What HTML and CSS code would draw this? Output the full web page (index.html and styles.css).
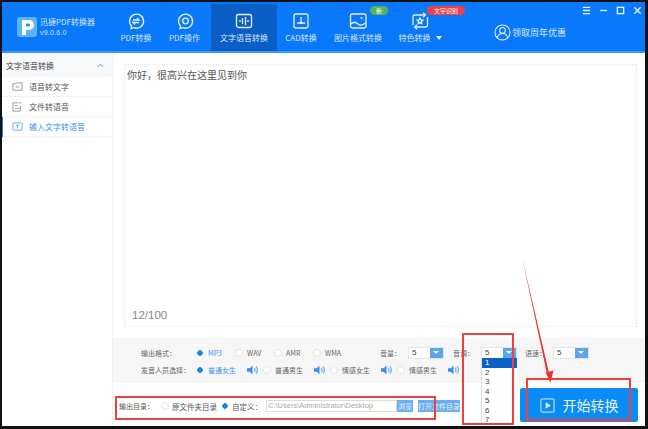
FILE: index.html
```html
<!DOCTYPE html>
<html lang="zh-CN">
<head>
    <meta charset="UTF-8">
    <meta name="viewport" content="width=device-width, initial-scale=1.0">
    <title>迅捷PDF转换器</title>
    <link rel="stylesheet" href="styles.css">
</head>
<body>
<div class="app">
    <header class="topbar">
        <div class="brand">
            <svg class="logo" viewBox="0 0 20 20" width="20" height="20">
                <rect x="0" y="0" width="20" height="20" rx="3" fill="#5db4f5"/>
                <path d="M5 18V3h7a5 5 0 0 1 0 10H9v5z" fill="#fff"/>
                <path d="M9 6.500v3h2.500a1.500 1.500 0 0 0 0-3z" fill="#2a8ef0"/>
            </svg>
            <div class="brand-text">
                <div class="brand-name">迅捷PDF转换器</div>
                <div class="brand-ver">v9.0.6.0</div>
            </div>
        </div>
        <nav class="tabs">
            <div class="tab tab-a">
                <svg viewBox="0 0 20 20" width="20" height="20" class="ico"><path d="M5.500 15A7 7 0 1 1 8 16.700L5 17.500z"/><path d="M7 9h6l-2-2M13 11.500H7l2 2"/></svg>
                <span>PDF转换</span>
            </div>
            <div class="tab tab-b">
                <svg viewBox="0 0 20 20" width="20" height="20" class="ico"><path d="M5.500 15A7 7 0 1 1 8 16.700L5 17.500z"/><circle cx="10.500" cy="10" r="2.800"/></svg>
                <span>PDF操作</span>
            </div>
            <div class="tab tab-c active">
                <svg viewBox="0 0 20 20" width="20" height="20" class="ico"><rect x="2.500" y="3.500" width="15" height="13" rx="2"/><path d="M6 9v2M8.500 7v6M11.500 6v8M14 9v2"/></svg>
                <span>文字语音转换</span>
            </div>
            <div class="tab tab-d">
                <svg viewBox="0 0 20 20" width="20" height="20" class="ico"><rect x="3" y="3" width="14" height="14" rx="2"/><path d="M10 6v6M6 12h8"/><circle class="dot" cx="10" cy="12" r="1.200"/></svg>
                <span>CAD转换</span>
            </div>
            <div class="tab tab-e">
                <svg viewBox="0 0 20 20" width="20" height="20" class="ico"><rect x="2.500" y="3" width="15.500" height="14" rx="2"/><path d="M3 13c3-3 5-2 7 0s4 1 8-1"/><circle class="dot" cx="13.500" cy="7" r="1"/></svg>
                <span>图片格式转换</span>
                <em class="badge badge-new">新</em>
            </div>
            <div class="tab tab-f">
                <svg viewBox="0 0 20 20" width="20" height="20" class="ico"><path d="M3 14V6a2 2 0 0 1 2-2h10M17.500 6v8a2 2 0 0 1-2 2H5M13 1.800l2.500 2.200L13 6.200M7 13.800L4.500 16 7 18.200"/><path d="M10 7l.9 1.900 2 .3-1.500 1.400.4 2-1.800-1-1.800 1 .4-2-1.500-1.400 2-.3z"/></svg>
                <span>特色转换<i class="caret"></i></span>
                <em class="badge badge-ocr">文字识别</em>
            </div>
        </nav>
        <div class="promo">
            <svg viewBox="0 0 18 18" width="17" height="17" class="ico"><circle cx="9" cy="9" r="8"/><circle cx="9" cy="6.800" r="3"/><path d="M3.500 15c.5-3.500 2.500-5 5.500-5s5 1.500 5.500 5"/></svg>
            <span>领取周年优惠</span>
        </div>
        <div class="winbtns">
            <svg viewBox="0 0 10 10" width="9" height="9"><path d="M1 1.500h8M1 5h8M1 8.500h8"/></svg>
            <svg viewBox="0 0 10 10" width="9" height="9"><path d="M1 5h8"/></svg>
            <svg viewBox="0 0 10 10" width="9" height="9"><rect x="1.500" y="1.500" width="7" height="7"/></svg>
            <svg viewBox="0 0 10 10" width="9" height="9"><path d="M1.500 1.500l7 7M8.500 1.500l-7 7"/></svg>
        </div>
    </header>

    <div class="main">
        <aside class="sidebar">
            <div class="side-head"><span>文字语音转换</span><svg viewBox="0 0 8 5" width="7" height="5"><path d="M1 4l3-3 3 3"/></svg></div>
            <div class="side-item">
                <svg viewBox="0 0 12 12" width="11" height="11"><path d="M1 3h3l1-1h6v8H1zM4 6.500h4"/></svg>
                <span>语音转文字</span>
            </div>
            <div class="side-item">
                <svg viewBox="0 0 12 12" width="11" height="11"><path d="M9 5v6H1V2h6M3 5h3M3 8h5M8 3l2-2"/></svg>
                <span>文件转语音</span>
            </div>
            <div class="side-item current">
                <svg viewBox="0 0 12 12" width="11" height="11"><rect x="1" y="2" width="10" height="8" rx="1"/><path d="M4 4.500h4M6 4.500V8"/></svg>
                <span>输入文字转语音</span>
            </div>
        </aside>

        <section class="content">
            <div class="editor">
                <div class="editor-text">你好，很高兴在这里见到你</div>
                <div class="editor-count">12/100</div>
            </div>

            <div class="options">
                <div class="opt-row">
                    <span class="opt-label">输出格式：</span>
                    <span class="radio-wrap w-a on"><i class="radio"></i>MP3</span>
                    <span class="radio-wrap w-b"><i class="radio"></i>WAV</span>
                    <span class="radio-wrap w-b"><i class="radio"></i>AMR</span>
                    <span class="radio-wrap w-c"><i class="radio"></i>WMA</span>
                    <span class="opt-name">音量：</span>
                    <span class="select"><span>5</span><b></b></span>
                    <span class="opt-name n-b">音调：</span>
                    <span class="select"><span>5</span><b></b></span>
                    <span class="opt-name n-c">语速：</span>
                    <span class="select"><span>5</span><b></b></span>
                </div>
                <div class="opt-row">
                    <span class="opt-label">发音人员选择：</span>
                    <span class="radio-wrap v on"><i class="radio"></i>普通女生</span>
                    <svg class="spk" viewBox="0 0 12 10" width="11" height="10"><path d="M0 3h3l3-3v10L3 7H0z"/><path class="wave" d="M8 2.500c1 1.500 1 3.500 0 5M10 1c1.700 2.500 1.700 5.500 0 8"/></svg>
                    <span class="radio-wrap v"><i class="radio"></i>普通男生</span>
                    <svg class="spk" viewBox="0 0 12 10" width="11" height="10"><path d="M0 3h3l3-3v10L3 7H0z"/><path class="wave" d="M8 2.500c1 1.500 1 3.500 0 5M10 1c1.700 2.500 1.700 5.500 0 8"/></svg>
                    <span class="radio-wrap v"><i class="radio"></i>情感女生</span>
                    <svg class="spk" viewBox="0 0 12 10" width="11" height="10"><path d="M0 3h3l3-3v10L3 7H0z"/><path class="wave" d="M8 2.500c1 1.500 1 3.500 0 5M10 1c1.700 2.500 1.700 5.500 0 8"/></svg>
                    <span class="radio-wrap v"><i class="radio"></i>情感男生</span>
                    <svg class="spk" viewBox="0 0 12 10" width="11" height="10"><path d="M0 3h3l3-3v10L3 7H0z"/><path class="wave" d="M8 2.500c1 1.500 1 3.500 0 5M10 1c1.700 2.500 1.700 5.500 0 8"/></svg>
                </div>
            </div>

            <div class="output">
                <span class="out-label">输出目录：</span>
                <span class="radio-wrap o-a"><i class="radio"></i>原文件夹目录</span>
                <span class="radio-wrap o-b on-dot"><i class="radio"></i>自定义：</span>
                <span class="path">C:\Users\Administrator\Desktop</span>
                <span class="btn-small browse">浏览</span>
                <span class="btn-small open">打开文件目录</span>
                <button class="start">
                    <svg viewBox="0 0 16 16" width="15" height="15"><rect x="1" y="1" width="14" height="14" rx="1"/><path class="tri" d="M6 4.500l5.500 3.500L6 11.500z"/></svg>
                    <span>开始转换</span>
                </button>
            </div>
        </section>
    </div>

    <ul class="droplist">
        <li class="sel">1</li>
        <li>2</li>
        <li>3</li>
        <li>4</li>
        <li>5</li>
        <li>6</li>
        <li>7</li>
    </ul>

    <!-- red annotations drawn on top of the shot -->
    <div class="mark mark-out"></div>
    <div class="mark mark-drop"></div>
    <div class="mark mark-start"></div>
    <svg class="arrow" viewBox="0 0 648 429" width="648" height="429">
        <path d="M522 257L549 373 547 374zM545.500 372.500L553.500 370.500 550.500 382.500z" fill="#f0322e"/>
    </svg>
</div>
</body>
</html>
```

FILE: styles.css
```css
* {
    box-sizing: border-box;
}
html, body {
    margin: 0;
    padding: 0;
    height: 100%;
    overflow: hidden;
}
body {
    font-family: "Noto Sans CJK SC", "Liberation Sans", sans-serif;
    background: #fff;
}
.app {
    position: relative;
    width: 648px;
    height: 429px;
    border-top: 2px solid #111;
    border-left: 2px solid #111;
    border-right: 3px solid #111;
    border-bottom: 3px solid #111;
    display: flex;
    flex-direction: column;
    overflow: hidden;
    background: #fff;
}

/* top bar */
.topbar {
    height: 51px;
    flex: none;
    display: flex;
    background: #0a78fb;
    border-bottom: 2px solid #3b97fb;
    color: #d5e8ff;
    position: relative;
}
.brand {
    width: 110px;
    display: flex;
    align-items: center;
    padding: 0 0 0 15px;
    gap: 3px;
    flex: none;
}
.brand-name {
    font-size: 8px;
    line-height: 11px;
}
.brand-ver {
    font-size: 7px;
    line-height: 11px;
    font-family: "Liberation Sans", sans-serif;
    letter-spacing: .2px;
}
.tabs {
    display: flex;
}
.tab {
    position: relative;
    display: flex;
    flex-direction: column;
    align-items: center;
    padding-top: 9px;
    font-size: 8px;
    gap: 1px;
}
.tab span {
    white-space: nowrap;
    line-height: 12px;
}
.tab-a { width: 48px; }
.tab-b { width: 49px; margin-right: 2px; }
.tab-c { width: 66px; }
.tab-d { width: 48px; }
.tab-e { width: 66px; }
.tab-f { width: 58px; }
.tab.active {
    background: #0a5ec6;
    margin-top: 2px;
    padding-top: 7px;
}
.ico {
    fill: none;
    stroke: #e6f1ff;
    stroke-width: 1.300;
}
.ico .dot {
    fill: #e6f1ff;
    stroke: none;
}
.caret {
    display: inline-block;
    border: 3px solid transparent;
    border-top: 4px solid #e6f1ff;
    border-bottom: 0;
    margin-left: 5px;
    vertical-align: 1px;
}
.badge {
    position: absolute;
    font-style: normal;
    font-size: 6px;
    line-height: 9px;
    height: 9px;
    border-radius: 5px;
    text-align: center;
    color: #fff;
}
.badge-new {
    left: 45px;
    top: 4px;
    width: 18px;
    background: #56b45a;
}
.badge-ocr {
    left: 36px;
    top: 4px;
    width: 38px;
    background: #ef4146;
}
.promo {
    display: flex;
    align-items: center;
    gap: 1px;
    margin-left: 45px;
    margin-top: 12px;
    font-size: 9px;
    white-space: nowrap;
}
.promo .ico {
    stroke-width: 1.100;
}
.winbtns {
    position: absolute;
    top: 4px;
    right: 3px;
    display: flex;
    gap: 8px;
}
.winbtns svg {
    fill: none;
    stroke: #e6f1ff;
    stroke-width: 1.500;
}

/* sidebar */
.main {
    flex: 1;
    display: flex;
    min-height: 0;
}
.sidebar {
    width: 111px;
    flex: none;
    border-right: 1px solid #eef0f2;
    font-size: 8px;
    color: #555;
}
.side-head {
    height: 24px;
    display: flex;
    align-items: center;
    justify-content: space-between;
    padding: 0 8px 0 4px;
    background: #f6f8fa;
    color: #444;
}
.side-head svg {
    fill: none;
    stroke: #3a8df0;
}
.side-item {
    height: 20px;
    display: flex;
    align-items: center;
    gap: 6px;
    padding-left: 10px;
    border-bottom: 1px solid #f1f2f4;
    position: relative;
}
.side-item svg {
    fill: none;
    stroke: #777;
    stroke-width: .8;
}
.side-item.current {
    color: #3a8df0;
}
.side-item.current svg {
    stroke: #3a8df0;
}
.side-item.current::before {
    content: "";
    position: absolute;
    left: 0;
    top: 0;
    width: 1px;
    height: 20px;
    background: #1a7cf0;
}

/* main panel */
.content {
    flex: 1;
    display: flex;
    flex-direction: column;
    min-width: 0;
}
.editor {
    margin: 11px 8px 0 11px;
    height: 263px;
    border: 1px dotted #e2e4e6;
    display: flex;
    flex-direction: column;
    justify-content: space-between;
    color: #555;
    padding: 1px 2px 3px 2px;
    flex: none;
}
.editor-text {
    font-size: 10px;
    line-height: 18px;
}
.editor-count {
    font-size: 11.500px;
    color: #888;
    padding-left: 5px;
    font-family: "Liberation Sans", sans-serif;
    line-height: 16px;
}
.options {
    margin-top: 11px;
    height: 45px;
    background: #f6f6f7;
    padding: 6px 0 0 28px;
    font-size: 7px;
    color: #666;
    flex: none;
}
.opt-row {
    height: 17px;
    display: flex;
    align-items: center;
    white-space: nowrap;
}
.opt-label {
    width: 55px;
    flex: none;
}
.radio-wrap {
    display: flex;
    align-items: center;
    flex: none;
}
.radio {
    width: 8px;
    height: 8px;
    border-radius: 50%;
    border: 1px solid #e4e4e4;
    background: #fff;
    margin-right: 4px;
    flex: none;
}
.on {
    color: #3a95f5;
}
.on .radio, .on-dot .radio {
    border: 0;
    background: radial-gradient(circle, #1583f0 0 2.500px, transparent 3px);
}
.w-a, .w-b { width: 39px; }
.w-c { width: 67px; }
.opt-name { width: 28px; flex: none; }
.n-b { margin-left: 9px; }
.n-c { margin-left: 8px; }
.select {
    width: 36px;
    height: 12px;
    background: #fff;
    border: 1px solid #e2e4e6;
    display: flex;
    justify-content: space-between;
    align-items: stretch;
    padding-left: 3px;
    flex: none;
    line-height: 10px;
    color: #444;
    font-family: "Liberation Sans", sans-serif;
    font-size: 8px;
}
.select b {
    width: 13px;
    background: #5aa5f0;
    position: relative;
}
.select b::after {
    content: "";
    position: absolute;
    left: 3px;
    top: 3px;
    border: 3px solid transparent;
    border-top: 3px solid #fff;
    border-bottom: 0;
}
.v {
    width: 51px;
}
.spk {
    flex: none;
    margin-right: 5px;
    fill: #3a8df0;
}
.spk .wave {
    fill: none;
    stroke: #3a8df0;
}
.output {
    flex: 1;
    display: flex;
    align-items: center;
    position: relative;
    padding: 3px 0 0 6px;
    font-size: 7.500px;
    color: #555;
    white-space: nowrap;
}
.out-label {
    width: 42px;
    flex: none;
    font-size: 7px;
}
.output .radio {
    margin-right: 3px;
}
.o-a { width: 60px; }
.o-b { width: 45px; }
.path {
    width: 131px;
    height: 12px;
    border: 1px solid #dcdcdc;
    color: #aaa;
    padding-left: 1px;
    line-height: 10px;
    font-size: 7.500px;
    font-family: "Liberation Sans", sans-serif;
    overflow: hidden;
    flex: none;
}
.btn-small {
    height: 12px;
    line-height: 12px;
    background: #6aaef2;
    color: #e4f0fd;
    text-align: center;
    font-size: 7px;
    flex: none;
}
.browse {
    width: 16px;
}
.open {
    width: 42px;
    margin-left: 5px;
}
.start {
    position: absolute;
    right: 7px;
    top: 5px;
    width: 118px;
    height: 34px;
    border: none;
    border-radius: 2px;
    background: #0a8cf6;
    color: #eaf5ff;
    font-family: inherit;
    font-size: 14px;
    display: flex;
    align-items: center;
    justify-content: center;
    gap: 8px;
    padding: 0;
}
.start svg {
    fill: none;
    stroke: #eaf5ff;
}
.start .tri {
    fill: #eaf5ff;
    stroke: none;
}

/* opened list of the pitch select */
.droplist {
    position: absolute;
    left: 479px;
    top: 356px;
    width: 36px;
    height: 67px;
    margin: 0;
    padding: 0;
    list-style: none;
    background: #fff;
    border-left: 1px solid #ddd;
    font-family: "Liberation Sans", sans-serif;
    font-size: 8px;
    color: #444;
    overflow: hidden;
}
.droplist li {
    height: 9.500px;
    line-height: 9.500px;
    padding-left: 3px;
}
.droplist .sel {
    background: #0b62c4;
    color: #fff;
}

/* annotations */
.mark {
    position: absolute;
    border: 2px solid #f0403c;
}
.mark-out {
    left: 113px;
    top: 394px;
    width: 321px;
    height: 24px;
}
.mark-drop {
    left: 460px;
    top: 331px;
    width: 52px;
    height: 92px;
}
.mark-start {
    left: 524px;
    top: 376px;
    width: 105px;
    height: 43px;
}
.arrow {
    position: absolute;
    left: -2px;
    top: -2px;
}
```
